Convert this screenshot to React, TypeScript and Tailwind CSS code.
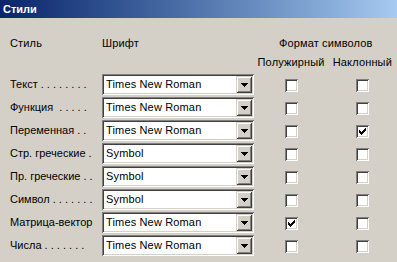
import React from "react";

const rows = [
  { label: "Текст . . . . . . . .", font: "Times New Roman", bold: false, italic: false },
  { label: "Функция  . . . . .", font: "Times New Roman", bold: false, italic: false },
  { label: "Переменная . .", font: "Times New Roman", bold: false, italic: true },
  { label: "Стр. греческие .", font: "Symbol", bold: false, italic: false },
  { label: "Пр. греческие . .", font: "Symbol", bold: false, italic: false },
  { label: "Символ . . . . . . .", font: "Symbol", bold: false, italic: false },
  { label: "Матрица-вектор", font: "Times New Roman", bold: true, italic: false },
  { label: "Числа . . . . . . .", font: "Times New Roman", bold: false, italic: false },
];

function Check({ on }: { on: boolean }) {
  return (
    <div className="flex h-[13px] w-[13px] items-center justify-center bg-white shadow-[inset_1px_1px_#808080,inset_-1px_-1px_#ffffff,inset_2px_2px_#404040,inset_-2px_-2px_#d4d0c8]">
      {on && (
        <svg width="7" height="7" viewBox="0 0 7 7" shapeRendering="crispEdges">
          <path
            d="M6 0h1v3h-1zM5 1h1v3h-1zM4 2h1v3h-1zM0 2h1v3h-1zM1 3h1v3h-1zM2 4h1v3h-1zM3 3h1v3h-1z"
            fill="#000"
          />
        </svg>
      )}
    </div>
  );
}

function Combo({ value }: { value: string }) {
  return (
    <div className="flex h-[21px] w-[154px] items-center bg-white p-[2px] shadow-[inset_1px_1px_#808080,inset_-1px_-1px_#ffffff,inset_2px_2px_#404040,inset_-2px_-2px_#d4d0c8]">
      <span className="flex-1 pl-[2px] text-[11px] leading-none tracking-[0.15px] text-black">{value}</span>
      <div className="flex h-[17px] w-[16px] items-center justify-center bg-[#d4d0c8] shadow-[inset_1px_1px_#d4d0c8,inset_-1px_-1px_#404040,inset_2px_2px_#ffffff,inset_-2px_-2px_#808080]">
        <svg width="7" height="4" viewBox="0 0 7 4" shapeRendering="crispEdges">
          <path d="M0 0h7v1h-7zM1 1h5v1h-5zM2 2h3v1h-3zM3 3h1v1h-1z" fill="#000" />
        </svg>
      </div>
    </div>
  );
}

export default function App() {
  return (
    <div
      className="h-[262px] w-[397px] overflow-hidden bg-[#d4d0c8] text-black"
      style={{ fontFamily: '"Liberation Sans", Arial, sans-serif' }}
    >
      <div className="flex h-[18px] items-center bg-gradient-to-r from-[#0a246a] to-[#a6caf0] pl-[3px] text-[11px] font-bold text-white">
        Стили
      </div>
      <div className="pl-[10px] pt-[18px] text-[11px]">
        <div className="flex h-[14px] items-center tracking-[0.15px]">
          <div className="w-[93px]">Стиль</div>
          <div className="w-[154px]">Шрифт</div>
          <div className="w-[144px] text-center">Формат символов</div>
        </div>
        <div className="mt-[5px] flex h-[14px] items-center tracking-[0.15px]">
          <div className="w-[247px]" />
          <div className="w-[74px] text-center">Полужирный</div>
          <div className="w-[70px] text-center">Наклонный</div>
        </div>
        <div className="mt-[5px] flex flex-col gap-[2px]">
          {rows.map((r) => (
            <div key={r.label} className="flex h-[21px] items-center">
              <div className="w-[93px] whitespace-pre">{r.label}</div>
              <Combo value={r.font} />
              <div className="flex w-[74px] justify-center pt-[2px]">
                <Check on={r.bold} />
              </div>
              <div className="flex w-[70px] justify-center pt-[2px]">
                <Check on={r.italic} />
              </div>
            </div>
          ))}
        </div>
      </div>
    </div>
  );
}
